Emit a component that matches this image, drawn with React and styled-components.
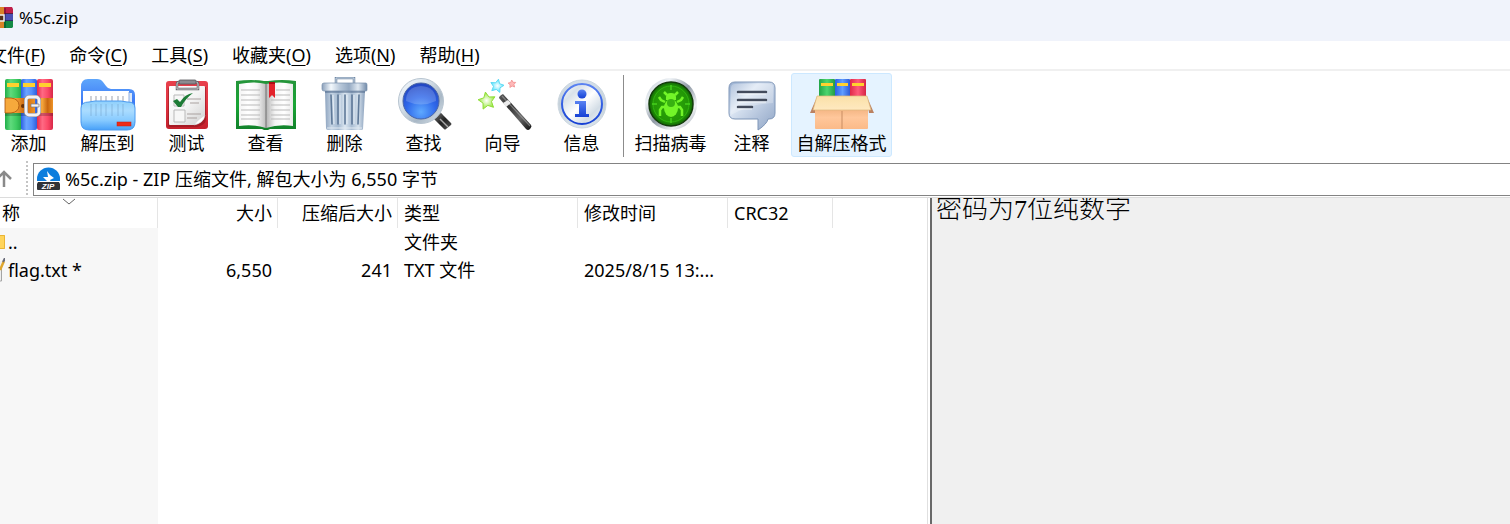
import React from "react";
import styled, { createGlobalStyle } from "styled-components";

const UI = `"Noto Sans", "Noto Sans CJK SC", sans-serif`;

const GlobalStyle = createGlobalStyle`
  *, *::before, *::after { box-sizing: border-box; }
  body {
    margin: 0;
    background: #fff;
    color: #000;
    font-family: ${UI};
    font-size: 18px;
    overflow: hidden;
  }
  button, select { font: inherit; color: inherit; }
`;

const Window = styled.div`
  display: flex;
  flex-direction: column;
  height: 100vh;
  overflow: hidden;
`;

const TitleBar = styled.header`
  display: flex;
  align-items: center;
  gap: 6px;
  flex: none;
  height: 41px;
  padding-bottom: 5px;
  background: #f0f3fb;
`;

const Title = styled.h1`
  margin: 0;
  font-size: 17px;
  font-weight: 400;
  line-height: 24px;
`;

const MenuBar = styled.nav`
  display: flex;
  flex: none;
  gap: 24px;
  height: 30px;
  margin-left: -11px;
  border-bottom: 2px solid #f0f0f0;
`;

const MenuItem = styled.button`
  flex: none;
  padding: 0;
  border: 0;
  background: none;
  line-height: 28px;
  white-space: nowrap;

  u {
    text-decoration-thickness: 1px;
    text-underline-offset: 3px;
  }
`;

const ToolBar = styled.div`
  display: flex;
  align-items: flex-start;
  flex: none;
  height: 90px;
  padding-top: 2px;
  margin-left: -11px;
`;

const ToolButton = styled.button`
  display: flex;
  flex-direction: column;
  align-items: center;
  flex: none;
  width: ${(p) => p.$width || 79}px;
  padding: 3px 0 1px;
  border: 1px solid ${(p) => (p.$hot ? "#cce8ff" : "transparent")};
  border-radius: 3px;
  background: ${(p) => (p.$hot ? "#e5f3ff" : "none")};
  line-height: 24px;
  white-space: nowrap;

  svg { display: block; }
`;

const Separator = styled.div`
  flex: none;
  width: 1px;
  height: 82px;
  margin: 2px 5px 0 2px;
  background: #8c8c8c;
`;

const AddressRow = styled.div`
  display: flex;
  align-items: stretch;
  flex: none;
  height: 37px;
  border-bottom: 1px solid #dcdcdc;
`;

const UpButton = styled.button`
  display: flex;
  align-items: center;
  width: 26px;
  padding: 0;
  border: 0;
  background: none;
`;

const Grip = styled.div`
  width: 2px;
  margin-right: 5px;
  background: repeating-linear-gradient(#c4c4c4 0 2px, #fff 2px 4px);
`;

const AddressBox = styled.label`
  display: flex;
  align-items: center;
  flex: 1;
  gap: 5px;
  margin: 2px 0 1px;
  padding: 0 0 2px 3px;
  border: 1px solid #838383;
  border-right: 0;
`;

const AddressSelect = styled.select`
  flex: 1;
  min-width: 0;
  padding: 0;
  border: 0;
  appearance: none;
  background: none;
  line-height: 28px;
`;

const Main = styled.main`
  display: flex;
  flex: 1;
  min-height: 0;
`;

const ListPane = styled.section`
  flex: 0 0 928px;
  border-right: 1px solid #e0e0e0;
`;

const FileTable = styled.table`
  width: 833px;
  height: 100%;
  table-layout: fixed;
  border-collapse: separate;
  border-spacing: 0;
`;

const HeaderCell = styled.th`
  height: 30px;
  padding: ${(p) => (p.$first ? "0 0 0 2px" : "0 5px 0 6px")};
  border-right: 1px solid #e5e5e5;
  font-weight: 400;
  line-height: 30px;
  text-align: ${(p) => (p.$right ? "right" : "left")};
  white-space: nowrap;
`;

const NameHeading = styled.div`
  position: relative;
  display: flex;
  height: 30px;
  overflow: hidden;

  span { margin-left: -18px; }
  svg {
    position: absolute;
    top: 0;
    left: 60px;
  }
`;

const Row = styled.tr`
  height: ${(p) => (p.$fill ? "auto" : "28px")};
`;

const Cell = styled.td`
  padding: 0 6px;
  overflow: hidden;
  line-height: 28px;
  text-align: ${(p) => (p.$right ? "right" : "left")};
  text-overflow: ellipsis;
  white-space: nowrap;
`;

const NameCell = styled(Cell)`
  padding: 0;
  background: #f7f7f7;
`;

const FileName = styled.div`
  display: flex;
  align-items: center;
  gap: 3px;
  height: 28px;
`;

const CommentPane = styled.aside`
  flex: 1;
  margin-left: 2px;
  padding-left: 4px;
  overflow: hidden;
  border-left: 2px solid #696969;
  background: #f0f0f0;
`;

const Comment = styled.p`
  margin: 0;
  font-family: "Liberation Serif", "Noto Sans CJK SC", serif;
  font-size: 26px;
  font-weight: 300;
  line-height: 24px;
`;

const Gradient = ({ id, stops, flat, diagonal }) => (
  <linearGradient id={id} x1="0" y1="0" x2={flat || diagonal ? 1 : 0} y2={flat ? 0 : 1}>
    {stops.map((c, i) => (
      <stop key={i} offset={i / (stops.length - 1)} stopColor={c} />
    ))}
  </linearGradient>
);

const Icon = ({ children }) => (
  <svg width="64" height="54" viewBox="0 0 64 54" aria-hidden="true">
    {children}
  </svg>
);

const AddIcon = () => (
  <Icon>
    <defs>
      <Gradient id="aG" flat stops={["#1fae49", "#5fda7c", "#3fcb62", "#22a547"]} />
      <Gradient id="aB" flat stops={["#2c5fe4", "#6ba4ff", "#5590fb", "#2e5fdc"]} />
      <Gradient id="aR" flat stops={["#e52a4b", "#ff6a84", "#fb4a68", "#d82848"]} />
      <Gradient id="aBelt" flat stops={["#f0982c", "#f4a53c", "#c8660f", "#ee9428"]} />
    </defs>
    <rect x="8" y="2" width="17" height="51" rx="2" fill="url(#aG)" />
    <rect x="24" y="2" width="16" height="51" rx="2" fill="url(#aB)" />
    <rect x="40" y="2" width="16" height="51" rx="2" fill="url(#aR)" />
    <path d="M10 6h12v4H10zM26 6h12v4H26zM42 6h12v4H42z" fill="#ffd12e" />
    <path d="M8 36h48v3H8z" fill="#000" opacity=".2" />
    <path d="M40 21h16v15H40z" fill="url(#aBelt)" />
    <path d="M8 21h30v15H8z" fill="url(#aBelt)" />
    <path d="M8 21h6q8 1 8 7.500t-8 7.500H8z" fill="#f6a93c" stroke="#a85208" strokeWidth=".8" />
    <circle cx="26" cy="29" r="2" fill="#6a3207" />
    <rect x="29" y="20" width="13" height="18" rx="3" fill="none" stroke="#8b8b93" strokeWidth="4" />
    <rect x="29" y="20" width="13" height="18" rx="3" fill="none" stroke="#f2f2f5" strokeWidth="2.800" />
    <path d="M34 27h8v3h-8z" fill="#f4f4f6" stroke="#77777f" strokeWidth=".7" />
  </Icon>
);

const ExtractIcon = () => (
  <Icon>
    <defs>
      <Gradient id="eBack" stops={["#5ea6fb", "#3f7cf6", "#2763e4"]} />
      <Gradient id="eFront" stops={["#8fd0fb", "#aadcff", "#87caff", "#47a0f8"]} />
    </defs>
    <path d="M5 10q0-8 7-8h9q4 0 6 3l3 4q2 3 5 3h18q6 0 6 6v28H5z" fill="url(#eBack)" />
    <path d="M7 14h46v22H7z" fill="#fff" />
    <path d="M53 16h3v20h-3z" fill="#dce8f6" />
    <path d="M53 15v20" stroke="#8eaee2" strokeWidth="1" />
    <path d="M15 19v7M20 19v7M25 19v7M30 19v7M36 19v7M42 19v7M47 19v7" stroke="#b4b8c0" strokeWidth="1.300" />
    <path d="M5 31q0-6 8-6l6-1h26l6 1h1q7 0 7 6v14q0 8-8 8H13q-8 0-8-8z" fill="url(#eFront)" stroke="#4a9af0" strokeWidth="1" />
    <path d="M15 27v12M20 27v12M25 27v12M30 27v12M36 27v12M42 27v12M47 27v12" stroke="#719fc8" strokeWidth="1.300" opacity=".4" />
    <rect x="41" y="45" width="14" height="4" fill="#ee2a17" stroke="#c81e10" strokeWidth=".5" />
  </Icon>
);

const TestIcon = () => (
  <Icon>
    <defs>
      <Gradient id="tR" stops={["#e8404c", "#e03340", "#c4202c"]} />
      <Gradient id="tP" diagonal stops={["#fff", "#f4f4f4", "#cfcfcf"]} />
    </defs>
    <rect x="11" y="4" width="42" height="48" rx="3" fill="url(#tR)" />
    <path d="M15 10h36v32q0 6-9 8H15q-2 0-2-2V12q0-2 2-2z" fill="#7b1118" opacity=".45" />
    <path d="M15 9h34q1 0 1 1v28q-1 8-11 10H15q-1 0-1-1V10q0-1 1-1z" fill="url(#tP)" />
    <path d="M39 48q3-5 11-10-1 8-11 10z" fill="#fff" stroke="#c4c4c4" strokeWidth=".5" />
    <path d="M22 12V7q0-2 2-2h17q2 0 2 2v5z" fill="none" stroke="#68686d" strokeWidth="2.500" />
    <path d="M22 12V7q0-2 2-2h17q2 0 2 2v5z" fill="none" stroke="#c8c8cc" strokeWidth="1" />
    <rect x="24" y="3" width="17" height="4" rx="1" fill="#8b8b90" stroke="#55555b" strokeWidth=".8" />
    <path d="M19 18h10v11H19zM19 33h11v12H19z" fill="#f7f7f7" stroke="#b9b9b9" strokeWidth="1" />
    <path d="M32 22h14M35 26h9M32 37h14M32 41h10" stroke="#aaa2a0" strokeWidth="1.200" />
    <path d="M18 24l4-2 3 3q5-8 13-9-7 5-12 14h-3z" fill="#1d7b36" />
  </Icon>
);

const ViewIcon = () => (
  <Icon>
    <defs>
      <Gradient id="vL" flat stops={["#f4f4f4", "#fff", "#f5f5f5", "#bdbdbd"]} />
      <Gradient id="vR" flat stops={["#b4b4b4", "#f4f4f4", "#fff", "#e9e9e9"]} />
      <Gradient id="vG" stops={["#25943a", "#19a535", "#11802a"]} />
    </defs>
    <path d="M2 4q16-2 28 0h4q14-2 28 0v48H36l-2 1h-4l-2-1H2z" fill="url(#vG)" />
    <path d="M5 7q15-3 27 0v44q-12-4-27-2z" fill="url(#vL)" />
    <path d="M32 7q13-3 27 0v42q-14-2-27 2z" fill="url(#vR)" />
    <path d="M32 7v44" stroke="#737373" strokeWidth="1" />
    <path d="M7 13h19M7 18h19M7 23h19M7 28h19M7 33h19M7 38h19M7 42h19M37 18h19M37 23h19M37 28h19M37 33h19M37 38h19M37 42h19M42 13h14" stroke="#b9b9b9" strokeWidth="1" />
    <path d="M35 5h6v16l-3-3-3 3z" fill="#e3222b" />
    <path d="M35 5h6v2h-6z" fill="#a90f16" />
  </Icon>
);

const DeleteIcon = () => (
  <Icon>
    <defs>
      <Gradient id="dB" flat stops={["#8ea4bf", "#c4d3e3", "#a3b8cf", "#dce7f1", "#a9bdd3", "#d5e1ec", "#8ba1bd"]} />
      <Gradient id="dL" flat stops={["#8ba0bb", "#f3f8fc", "#b8c8da", "#94a9c2", "#dfe8f1", "#718aa9"]} />
    </defs>
    <path d="M23 6V1h18v5" fill="none" stroke="#7188a5" strokeWidth="2.500" />
    <path d="M23 6V1h18v5" fill="none" stroke="#c9d6e3" strokeWidth="1" />
    <path d="M12 14h40l-2 38q0 1-2 1H15q-2 0-2-2z" fill="url(#dB)" />
    <path d="M18 18l1 29M25 18v29M32 18v29M39 18v29M46 18l-1 29" stroke="#5f7998" strokeWidth="1.600" strokeLinecap="round" />
    <path d="M20 18l1 29M27 18v29M34 18v29M41 18v29" stroke="#e6eef6" strokeWidth="1" />
    <path d="M11 6h42q1 0 1 2v5q0 1-1 1H11q-2 0-2-2V8q0-2 2-2z" fill="url(#dL)" stroke="#7890ad" strokeWidth=".7" />
    <path d="M12 14h40v2H12z" fill="#445f82" opacity=".45" />
    <path d="M14 51h35" stroke="#e1eaf2" strokeWidth="1" />
  </Icon>
);

const FindIcon = () => (
  <Icon>
    <defs>
      <radialGradient id="fG" cx=".5" cy=".8" r=".75">
        <stop offset="0" stopColor="#5ea9ff" />
        <stop offset=".55" stopColor="#2f68ea" />
        <stop offset="1" stopColor="#2348c4" />
      </radialGradient>
      <Gradient id="fR" diagonal stops={["#f4f8fc", "#dce6ee", "#a9b8c6", "#dce5ed"]} />
      <Gradient id="fH" diagonal stops={["#777", "#222", "#555"]} />
    </defs>
    <path d="M43 38l4-4 4 4-4 5z" fill="#9ba6af" />
    <path d="M42 42l7-6 10 10q1 1 0 2l-5 4q-1 1-2 0z" fill="url(#fH)" />
    <path d="M48 42l8 8" stroke="#aaa" strokeWidth="1.500" />
    <circle cx="29" cy="24" r="22.500" fill="url(#fR)" stroke="#b7c4d0" strokeWidth="1" />
    <circle cx="29" cy="24" r="18" fill="url(#fG)" stroke="#4a66a6" strokeWidth="1" />
    <path d="M14 24q0-14 15-15 15 1 15 15-15 7-30 0z" fill="#fff" opacity=".18" />
  </Icon>
);

const Star = ({ x, y, size, turn, fill, edge }) => {
  const pts = Array.from({ length: 10 }, (_, i) => {
    const a = ((i * 36 - 90 + turn) * Math.PI) / 180;
    const r = i % 2 ? size * 0.5 : size;
    return `${(x + r * Math.cos(a)).toFixed(1)},${(y + r * Math.sin(a)).toFixed(1)}`;
  }).join(" ");
  return <polygon points={pts} fill={fill} stroke={edge} strokeWidth="1" strokeLinejoin="round" />;
};

const WizardIcon = () => (
  <Icon>
    <defs>
      <radialGradient id="wG">
        <stop offset="0" stopColor="#fff" />
        <stop offset="1" stopColor="#95e838" />
      </radialGradient>
      <radialGradient id="wC">
        <stop offset="0" stopColor="#fff" />
        <stop offset="1" stopColor="#58e2fb" />
      </radialGradient>
      <Gradient id="wW" diagonal stops={["#5c5c5c", "#333", "#666", "#111"]} />
    </defs>
    <Star x={16} y={24} size={9} turn={-10} fill="url(#wG)" edge="#8fdd38" />
    <Star x={26} y={9} size={7} turn={12} fill="url(#wC)" edge="#5cdaf5" />
    <Star x={41} y={7} size={4} turn={-5} fill="#ffb8b8" edge="#f49a9a" />
    <path d="M32 17l28 31q1 2-1 4t-4 0L28 21q0-2 4-4z" fill="url(#wW)" />
    <path d="M31 19l28 30" stroke="#a8a8a8" strokeWidth="1.200" opacity=".6" />
    <path d="M37 23l3 3-5 4-3-4z" fill="#ebebeb" />
  </Icon>
);

const InfoIcon = () => (
  <Icon>
    <defs>
      <Gradient id="iO" stops={["#d5e0e9", "#c4d0d9", "#dbe5ec"]} />
      <Gradient id="iI" diagonal stops={["#fff", "#d9e2ea", "#fff", "#d3dde6", "#f5f8fb"]} />
      <Gradient id="iB" stops={["#5b83f2", "#3460e3", "#1741d4"]} />
    </defs>
    <circle cx="32" cy="27" r="24" fill="url(#iO)" stroke="#cbd6df" strokeWidth="1" />
    <circle cx="32" cy="27" r="20" fill="url(#iI)" stroke="url(#iB)" strokeWidth="2" />
    <circle cx="32" cy="17" r="4.500" fill="url(#iB)" />
    <path d="M25 24h11v13h3v3H25v-3h4V27h-4z" fill="url(#iB)" />
  </Icon>
);

const VirusIcon = () => (
  <Icon>
    <defs>
      <Gradient id="sR" diagonal stops={["#b9c2cc", "#eef2f6", "#8f99a5", "#f2f4f6", "#939ca6"]} />
      <radialGradient id="sG">
        <stop offset="0" stopColor="#2eab0a" />
        <stop offset=".8" stopColor="#229506" />
        <stop offset="1" stopColor="#116804" />
      </radialGradient>
    </defs>
    <circle cx="32" cy="27" r="26" fill="url(#sR)" />
    <circle cx="32" cy="27" r="22" fill="url(#sG)" stroke="#143b0c" strokeWidth="1.500" />
    <circle cx="32" cy="27" r="18" fill="none" stroke="#30b40f" strokeWidth="1" />
    <path d="M32 8v5M32 41v5M13 27h5M46 27h5" stroke="#46cf1c" strokeWidth="1.500" />
    <path d="M27 20q0-4 5-4t5 4v3H27z" fill="#72f528" />
    <path d="M28 18l-3-3M36 18l3-3M26 25l-4-2-2-3M38 25l4-2 2-3M26 30h-3l-2 3v6M38 30h3l2 3v6" fill="none" stroke="#72f528" strokeWidth="2.500" />
    <ellipse cx="32" cy="31" rx="7" ry="9" fill="#72f528" />
    <circle cx="32" cy="26" r="4" fill="#38b212" />
  </Icon>
);

const CommentIcon = () => (
  <Icon>
    <defs>
      <Gradient id="cB" diagonal stops={["#92aacd", "#dde7f4", "#b4c4dc", "#8fa5c5"]} />
    </defs>
    <path d="M15 5h34q6 0 6 6v25q0 6-6 6h-1q-1 5-10 11V42H15q-6 0-6-6V11q0-6 6-6z" fill="url(#cB)" stroke="#7f96b8" strokeWidth="1" />
    <path d="M15 7h34q4 0 4 3v16Q31 27 11 38V11q0-4 4-4z" fill="#fff" opacity=".25" />
    <path d="M18 15h28M18 23h28M18 30h14" stroke="#434b5c" strokeWidth="2.500" strokeLinecap="round" />
    <path d="M18 17h28M18 25h28M18 32h14" stroke="#fff" strokeWidth="1" opacity=".7" />
  </Icon>
);

const SfxIcon = () => (
  <Icon>
    <defs>
      <Gradient id="xG" flat stops={["#22a547", "#4cd56e", "#239d46"]} />
      <Gradient id="xB" flat stops={["#2c5fe4", "#609dff", "#2e5bd6"]} />
      <Gradient id="xR" flat stops={["#e02848", "#ff5a7a", "#d62444"]} />
      <Gradient id="xF" stops={["#efae7a", "#ffc79b", "#fbba88"]} />
      <Gradient id="xT" stops={["#fae0a8", "#ffe9c0"]} />
    </defs>
    <path d="M7 20L5 36H0zM57 20l2 16h5z" fill="#bb8161" />
    <rect x="9" y="2" width="16" height="24" rx="1" fill="url(#xG)" />
    <rect x="25" y="2" width="15" height="24" rx="1" fill="url(#xB)" />
    <rect x="40" y="2" width="16" height="24" rx="1" fill="url(#xR)" />
    <path d="M11 6h12v3H11zM27 6h11v3H27zM42 6h12v3H42z" fill="#ffd12e" />
    <path d="M5 29h53v22q0 1-1 1H6q-1 0-1-1z" fill="url(#xF)" />
    <path d="M32 34v18" stroke="#c98d62" strokeWidth="1" />
    <path d="M7 19h50l4 14H3z" fill="url(#xT)" stroke="#deb77c" strokeWidth=".7" />
  </Icon>
);

const AppIcon = () => (
  <svg width="13" height="22" viewBox="0 0 13 22" aria-hidden="true">
    <path d="M0 0h12l1 2v5H0z" fill="#c01f4a" />
    <path d="M0 7h13v7H0z" fill="#4b50b4" />
    <path d="M0 14h13v6l-1 1H0z" fill="#148a45" />
    <path d="M5 1v20" stroke="#000" strokeWidth="1" opacity=".5" />
    <path d="M5 6.500h8M5 13.500h8" stroke="#1c1c3c" opacity=".6" />
    <path d="M0 0h4v21H0z" fill="#d98328" />
    <path d="M0 8h4v6H0" fill="#553018" stroke="#eee" strokeWidth="1.500" />
  </svg>
);

const UpArrow = () => (
  <svg width="13" height="20" viewBox="0 0 13 20" aria-hidden="true">
    <path d="M4 18V3M-3 10l7-7 7 7" fill="none" stroke="#8a8a8a" strokeWidth="2.500" />
  </svg>
);

const ZipIcon = () => (
  <svg width="23" height="24" viewBox="0 0 23 24" aria-hidden="true">
    <path d="M0 14V12a11.500 11.500 0 0 1 23 0v2z" fill="#0b7ddd" />
    <path d="M10 4l3 4 4 3-4 2 1 2h-3l-5-5h5z" fill="#fff" />
    <path d="M1 15h21l1 2v5q0 1-1 1H1q-1 0-1-1v-5z" fill="#303236" />
    <text x="11" y="22" fill="#fff" fontSize="8" fontWeight="700" fontStyle="italic" textAnchor="middle" fontFamily="Liberation Sans, sans-serif">ZIP</text>
  </svg>
);

const FolderIcon = () => (
  <svg width="5" height="16" viewBox="0 0 5 16" aria-hidden="true">
    <path d="M0 1h5v14H0z" fill="#ffd45a" />
    <path d="M0 1.500h4.500v13H0" fill="none" stroke="#e9b435" />
  </svg>
);

const TextFileIcon = () => (
  <svg width="5" height="24" viewBox="0 0 5 24" aria-hidden="true">
    <path d="M0 3h2v20H0z" fill="#eee" />
    <path d="M1.500 9v14H0" fill="none" stroke="#a5a5a5" />
    <path d="M4 3L0 12" stroke="#dfa62b" strokeWidth="2.500" />
    <path d="M5 0L3 4" stroke="#696b79" strokeWidth="2" />
  </svg>
);

const menus = [
  ["文件", "F"],
  ["命令", "C"],
  ["工具", "S"],
  ["收藏夹", "O"],
  ["选项", "N"],
  ["帮助", "H"],
];

const archiveTools = [
  ["添加", AddIcon],
  ["解压到", ExtractIcon],
  ["测试", TestIcon],
  ["查看", ViewIcon],
  ["删除", DeleteIcon],
  ["查找", FindIcon],
  ["向导", WizardIcon],
  ["信息", InfoIcon],
];

const extraTools = [
  { label: "扫描病毒", Art: VirusIcon, width: 83 },
  { label: "注释", Art: CommentIcon, width: 79 },
  { label: "自解压格式", Art: SfxIcon, width: 101, hot: true },
];

const files = [
  { name: "..", Art: FolderIcon, size: "", packed: "", type: "文件夹", time: "" },
  { name: "flag.txt *", Art: TextFileIcon, size: "6,550", packed: "241", type: "TXT 文件", time: "2025/8/15 13:..." },
];

export default function App() {
  return (
    <Window>
      <GlobalStyle />
      <TitleBar>
        <AppIcon />
        <Title>%5c.zip</Title>
      </TitleBar>
      <MenuBar>
        {menus.map(([name, key]) => (
          <MenuItem key={key} type="button">
            {name}(<u>{key}</u>)
          </MenuItem>
        ))}
      </MenuBar>
      <ToolBar role="toolbar">
        {archiveTools.map(([label, Art]) => (
          <ToolButton key={label} type="button">
            <Art />
            {label}
          </ToolButton>
        ))}
        <Separator />
        {extraTools.map(({ label, Art, width, hot }) => (
          <ToolButton key={label} type="button" $width={width} $hot={hot}>
            <Art />
            {label}
          </ToolButton>
        ))}
      </ToolBar>
      <AddressRow>
        <UpButton type="button" aria-label="向上">
          <UpArrow />
        </UpButton>
        <Grip />
        <AddressBox>
          <ZipIcon />
          <AddressSelect aria-label="路径">
            <option>%5c.zip - ZIP 压缩文件, 解包大小为 6,550 字节</option>
          </AddressSelect>
        </AddressBox>
      </AddressRow>
      <Main>
        <ListPane>
          <FileTable>
            <colgroup>
              <col width="158" />
              <col width="120" />
              <col width="120" />
              <col width="180" />
              <col width="150" />
              <col width="105" />
            </colgroup>
            <thead>
              <tr>
                <HeaderCell $first>
                  <NameHeading>
                    <span>名称</span>
                    <svg width="14" height="8" viewBox="0 0 14 8" aria-hidden="true">
                      <path d="M1 1l6 5 6-5" fill="none" stroke="#666" />
                    </svg>
                  </NameHeading>
                </HeaderCell>
                <HeaderCell $right>大小</HeaderCell>
                <HeaderCell $right>压缩后大小</HeaderCell>
                <HeaderCell>类型</HeaderCell>
                <HeaderCell>修改时间</HeaderCell>
                <HeaderCell>CRC32</HeaderCell>
              </tr>
            </thead>
            <tbody>
              {files.map(({ name, Art, size, packed, type, time }) => (
                <Row key={name}>
                  <NameCell>
                    <FileName>
                      <Art />
                      {name}
                    </FileName>
                  </NameCell>
                  <Cell $right>{size}</Cell>
                  <Cell $right>{packed}</Cell>
                  <Cell>{type}</Cell>
                  <Cell>{time}</Cell>
                  <Cell />
                </Row>
              ))}
              <Row $fill>
                <NameCell />
                <Cell colSpan={5} />
              </Row>
            </tbody>
          </FileTable>
        </ListPane>
        <CommentPane>
          <Comment>密码为7位纯数字</Comment>
        </CommentPane>
      </Main>
    </Window>
  );
}
